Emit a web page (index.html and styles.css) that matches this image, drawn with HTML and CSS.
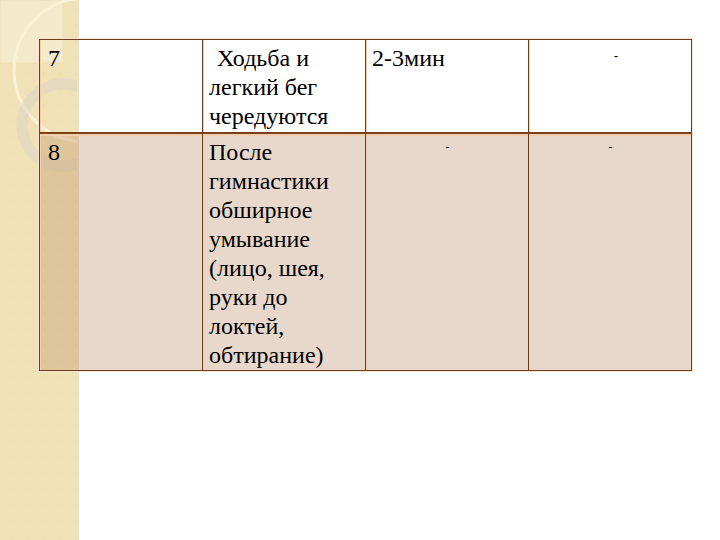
FILE: index.html
```html
<!DOCTYPE html>
<html lang="ru">
<head>
<meta charset="utf-8">
<title>Таблица</title>
<link rel="stylesheet" href="styles.css">
</head>
<body>
<div class="deco" aria-hidden="true">
  <svg width="79" height="540" viewBox="0 0 79 540" xmlns="http://www.w3.org/2000/svg">
    <defs>
      <pattern id="dots" width="16" height="16" patternUnits="userSpaceOnUse">
        <circle cx="12" cy="10" r="1.6" fill="#eadaae" opacity="0.5"/>
      </pattern>
      <clipPath id="clip"><rect x="0" y="0" width="77" height="540"/></clipPath>
    </defs>
    <rect x="0" y="0" width="77" height="540" fill="#f1e1b6"/>
    <rect x="0" y="0" width="77" height="540" fill="url(#dots)"/>
    <rect x="77" y="0" width="2" height="540" fill="#f3dfc6"/>
    <g clip-path="url(#clip)">
      <rect x="0" y="0" width="63" height="63" fill="#f5e9cc" stroke="#efdfb9" stroke-width="1"/>
      <circle cx="86" cy="70" r="72" fill="none" stroke="#fbf1d4" stroke-width="3"/>
      <circle cx="63" cy="125" r="41" fill="none" stroke="#ddd5c4" stroke-width="11" opacity="0.55"/>
    </g>
  </svg>
</div>
<main class="page">
  <table class="grid">
    <tr class="row-a">
      <td class="num">7</td>
      <td class="txt indent">Ходьба и легкий бег чередуются</td>
      <td class="txt">2-3мин</td>
      <td class="dash dash-a">-</td>
    </tr>
    <tr class="row-b">
      <td class="num">8</td>
      <td class="txt">После гимнастики обширное умывание (лицо, шея, руки до локтей, обтирание)</td>
      <td class="dash">-</td>
      <td class="dash">-</td>
    </tr>
  </table>
</main>
</body>
</html>
```
FILE: styles.css
```css
html, body {
  margin: 0;
  padding: 0;
  background: #ffffff;
}
body {
  width: 720px;
  height: 540px;
  overflow: hidden;
  position: relative;
  font-family: "Liberation Serif", "Times New Roman", serif;
  color: #000;
}
.deco {
  position: absolute;
  left: 0;
  top: 0;
  width: 79px;
  height: 540px;
  z-index: 0;
}
.deco svg { display: block; }
.page {
  position: relative;
  z-index: 1;
  padding: 39px 0 0 39px;
}
.grid {
  border-collapse: collapse;
  table-layout: fixed;
  width: 653px;
  box-shadow: 0 0 0 1px #fbe6d2;
}
.grid td {
  box-sizing: border-box;
  width: 163px;
  border: 1px solid #6e3c1c;
  vertical-align: top;
  font-size: 24px;
  line-height: 29px;
  padding: 4px 6px 0 7px;
  box-shadow: inset 1px 0 0 #f4cfa8;
}
.row-a td {
  height: 93px;
  border-bottom: 2px solid #7a3f18;
}
.row-b td {
  background: rgba(191, 147, 110, 0.36);
  padding-top: 4px;
  height: 237px;
  box-shadow: inset 1px 0 0 #f4cfa8, inset 0 2px 0 #f3cfae;
}
.num { padding-left: 8px !important; }
.txt { padding-left: 6px !important; }
.indent { text-indent: 8px; }
.dash {
  text-align: center;
  font-size: 12px !important;
  line-height: 20px !important;
  font-weight: bold;
}
.row-a .dash-a {
  padding-top: 6px;
  padding-left: 18px;
}
.row-b .dash {
  font-weight: normal;
  padding-top: 3px;
}
```
